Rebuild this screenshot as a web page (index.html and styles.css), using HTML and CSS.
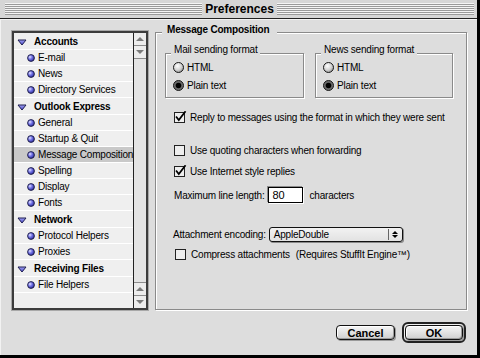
FILE: index.html
```html
<!DOCTYPE html>
<html>
<head>
<meta charset="utf-8">
<title>Preferences</title>
<link rel="stylesheet" href="styles.css">
</head>
<body>
<svg class="defs" width="0" height="0" aria-hidden="true">
  <defs>
    <radialGradient id="dotg" cx="35%" cy="35%" r="70%">
      <stop offset="0" stop-color="#e4e4ff"/>
      <stop offset="0.45" stop-color="#7474e8"/>
      <stop offset="1" stop-color="#2a2a9a"/>
    </radialGradient>
    <radialGradient id="radg" cx="40%" cy="35%" r="70%">
      <stop offset="0" stop-color="#ffffff"/>
      <stop offset="0.6" stop-color="#d0d0d0"/>
      <stop offset="1" stop-color="#8a8a8a"/>
    </radialGradient>
    <linearGradient id="trig" x1="0" y1="0" x2="0" y2="1">
      <stop offset="0" stop-color="#a0a0f4"/>
      <stop offset="1" stop-color="#4a4ac8"/>
    </linearGradient>
  </defs>
</svg>
<div class="window">
  <div class="titlebar">
    <div class="stripes"></div>
    <div class="title">Preferences</div>
    <div class="stripes"></div>
  </div>
  <div class="content">
    <div class="main">
      <div class="list">
        <div class="items">
          <div class="row head"><svg class="tri" width="10" height="7" viewBox="0 0 10 7"><polygon points="1,1 9,1 5,6" fill="url(#trig)" stroke="#1e1e50" stroke-width="1" stroke-linejoin="round"/></svg>Accounts</div>
          <div class="row item"><svg class="dot" width="8" height="8" viewBox="0 0 8 8"><circle cx="4" cy="4" r="3.4" fill="url(#dotg)" stroke="#1a1a40" stroke-width="0.9"/></svg>E-mail</div>
          <div class="row item"><svg class="dot" width="8" height="8" viewBox="0 0 8 8"><circle cx="4" cy="4" r="3.4" fill="url(#dotg)" stroke="#1a1a40" stroke-width="0.9"/></svg>News</div>
          <div class="row item"><svg class="dot" width="8" height="8" viewBox="0 0 8 8"><circle cx="4" cy="4" r="3.4" fill="url(#dotg)" stroke="#1a1a40" stroke-width="0.9"/></svg>Directory Services</div>
          <div class="row head"><svg class="tri" width="10" height="7" viewBox="0 0 10 7"><polygon points="1,1 9,1 5,6" fill="url(#trig)" stroke="#1e1e50" stroke-width="1" stroke-linejoin="round"/></svg>Outlook Express</div>
          <div class="row item"><svg class="dot" width="8" height="8" viewBox="0 0 8 8"><circle cx="4" cy="4" r="3.4" fill="url(#dotg)" stroke="#1a1a40" stroke-width="0.9"/></svg>General</div>
          <div class="row item"><svg class="dot" width="8" height="8" viewBox="0 0 8 8"><circle cx="4" cy="4" r="3.4" fill="url(#dotg)" stroke="#1a1a40" stroke-width="0.9"/></svg>Startup &amp; Quit</div>
          <div class="row item selected"><svg class="dot" width="8" height="8" viewBox="0 0 8 8"><circle cx="4" cy="4" r="3.4" fill="url(#dotg)" stroke="#1a1a40" stroke-width="0.9"/></svg>Message Composition</div>
          <div class="row item"><svg class="dot" width="8" height="8" viewBox="0 0 8 8"><circle cx="4" cy="4" r="3.4" fill="url(#dotg)" stroke="#1a1a40" stroke-width="0.9"/></svg>Spelling</div>
          <div class="row item"><svg class="dot" width="8" height="8" viewBox="0 0 8 8"><circle cx="4" cy="4" r="3.4" fill="url(#dotg)" stroke="#1a1a40" stroke-width="0.9"/></svg>Display</div>
          <div class="row item"><svg class="dot" width="8" height="8" viewBox="0 0 8 8"><circle cx="4" cy="4" r="3.4" fill="url(#dotg)" stroke="#1a1a40" stroke-width="0.9"/></svg>Fonts</div>
          <div class="row head"><svg class="tri" width="10" height="7" viewBox="0 0 10 7"><polygon points="1,1 9,1 5,6" fill="url(#trig)" stroke="#1e1e50" stroke-width="1" stroke-linejoin="round"/></svg>Network</div>
          <div class="row item"><svg class="dot" width="8" height="8" viewBox="0 0 8 8"><circle cx="4" cy="4" r="3.4" fill="url(#dotg)" stroke="#1a1a40" stroke-width="0.9"/></svg>Protocol Helpers</div>
          <div class="row item"><svg class="dot" width="8" height="8" viewBox="0 0 8 8"><circle cx="4" cy="4" r="3.4" fill="url(#dotg)" stroke="#1a1a40" stroke-width="0.9"/></svg>Proxies</div>
          <div class="row head"><svg class="tri" width="10" height="7" viewBox="0 0 10 7"><polygon points="1,1 9,1 5,6" fill="url(#trig)" stroke="#1e1e50" stroke-width="1" stroke-linejoin="round"/></svg>Receiving Files</div>
          <div class="row item"><svg class="dot" width="8" height="8" viewBox="0 0 8 8"><circle cx="4" cy="4" r="3.4" fill="url(#dotg)" stroke="#1a1a40" stroke-width="0.9"/></svg>File Helpers</div>
        </div>
        <div class="scrollbar">
          <div class="sb-btn up top"></div>
          <div class="sb-btn down top"></div>
          <div class="sb-track"></div>
          <div class="sb-btn up bottom"></div>
          <div class="sb-btn down bottom"></div>
        </div>
      </div>
      <div class="group">
        <div class="group-title">Message Composition</div>
        <div class="formats">
          <div class="box mail">
            <div class="box-title">Mail sending format</div>
            <div class="radio-row"><svg class="radio" width="11" height="11" viewBox="0 0 11 11"><circle cx="5.5" cy="5.5" r="5" fill="url(#radg)" stroke="#1a1a1a" stroke-width="1"/></svg>HTML</div>
            <div class="radio-row"><svg class="radio" width="11" height="11" viewBox="0 0 11 11"><circle cx="5.5" cy="5.5" r="5" fill="#6a6a6a" stroke="#1a1a1a" stroke-width="1"/><circle cx="5.5" cy="5.5" r="2.8" fill="#000"/></svg>Plain text</div>
          </div>
          <div class="box news">
            <div class="box-title">News sending format</div>
            <div class="radio-row"><svg class="radio" width="11" height="11" viewBox="0 0 11 11"><circle cx="5.5" cy="5.5" r="5" fill="url(#radg)" stroke="#1a1a1a" stroke-width="1"/></svg>HTML</div>
            <div class="radio-row"><svg class="radio" width="11" height="11" viewBox="0 0 11 11"><circle cx="5.5" cy="5.5" r="5" fill="#6a6a6a" stroke="#1a1a1a" stroke-width="1"/><circle cx="5.5" cy="5.5" r="2.8" fill="#000"/></svg>Plain text</div>
          </div>
        </div>
        <div class="opt reply"><svg class="check" width="13" height="12" viewBox="0 0 13 12"><rect x="0.5" y="1.5" width="10" height="10" fill="#eeeeee" stroke="#222" stroke-width="1"/><path d="M2.6 6.2 L4.8 9 L11 1" fill="none" stroke="#000" stroke-width="1.8" stroke-linecap="square"/></svg>Reply to messages using the format in which they were sent</div>
        <div class="opt quoting"><svg class="check" width="13" height="12" viewBox="0 0 13 12"><rect x="0.5" y="1.5" width="10" height="10" fill="#eeeeee" stroke="#222" stroke-width="1"/></svg>Use quoting characters when forwarding</div>
        <div class="opt internet"><svg class="check" width="13" height="12" viewBox="0 0 13 12"><rect x="0.5" y="1.5" width="10" height="10" fill="#eeeeee" stroke="#222" stroke-width="1"/><path d="M2.6 6.2 L4.8 9 L11 1" fill="none" stroke="#000" stroke-width="1.8" stroke-linecap="square"/></svg>Use Internet style replies</div>
        <div class="opt linelen"><span>Maximum line length:</span><span class="field">80</span><span class="after">characters</span></div>
        <div class="opt encoding"><span>Attachment encoding:</span><span class="popup"><span class="popup-text">AppleDouble</span><span class="popup-arrows"><span class="pa-up"></span><span class="pa-down"></span></span></span></div>
        <div class="opt compress"><svg class="check" width="13" height="12" viewBox="0 0 13 12"><rect x="0.5" y="1.5" width="10" height="10" fill="#eeeeee" stroke="#222" stroke-width="1"/></svg>Compress attachments<span class="note">(Requires StuffIt Engine™)</span></div>
      </div>
    </div>
    <div class="buttons">
      <div class="btn cancel">Cancel</div>
      <div class="default-ring"><div class="btn ok">OK</div></div>
    </div>
  </div>
</div>
</body>
</html>
```

FILE: styles.css
```css
* { box-sizing: border-box; }
html, body { margin: 0; padding: 0; }
body {
  width: 480px;
  height: 358px;
  overflow: hidden;
  background: #dddddd;
  font-family: "Liberation Sans", Arial, sans-serif;
  font-size: 10px;
  letter-spacing: -0.2px;
  color: #000;
}
.defs { display: block; width: 0; height: 0; overflow: hidden; }

.window {
  width: 480px;
  height: 358px;
  background: #dddddd;
  border-right: 3px solid #000;
  border-bottom: 3px solid #000;
  display: flex;
  flex-direction: column;
}

/* title bar */
.titlebar {
  flex: none;
  height: 19px;
  display: flex;
  align-items: center;
  padding: 0 3px 0 5px;
  background: #d6d6d6;
  border-bottom: 1px solid #222;
}
.stripes {
  flex: 1;
  height: 12px;
  background: repeating-linear-gradient(to bottom, #f4f4f4 0 1px, #9a9a9a 1px 2px);
}
.title {
  padding: 0 3px;
  font-size: 12px;
  font-weight: bold;
  letter-spacing: 0;
  line-height: 14px;
}

.content {
  flex: 1;
  display: flex;
  flex-direction: column;
  padding: 12px 10px 0 12px;
  box-shadow: inset 1px 1px 0 #f2f2f2;
}
.main {
  display: flex;
  gap: 7px;
  align-items: flex-start;
}

/* list */
.list {
  width: 136px;
  height: 279px;
  border: 2px solid #3c3c3c;
  box-shadow: 0 0 0 1px #a8a8a8;
  display: flex;
  background: #efefef;
}
.items {
  flex: 1;
  display: flex;
  flex-direction: column;
}
.row {
  height: 16px;
  border-bottom: 1px solid #ffffff;
  display: flex;
  align-items: center;
  white-space: nowrap;
}
.row.head {
  height: 17px;
  font-weight: bold;
  padding-left: 3px;
}
.row.head .tri {
  margin: 3px 7px 0 0;
  flex: none;
}
.row.item {
  padding-left: 13px;
}
.row.item .dot {
  margin-right: 3px;
  flex: none;
}
.row.selected { background: #c9c9c9; }

.scrollbar {
  width: 14px;
  border-left: 1px solid #222;
  display: flex;
  flex-direction: column;
  background: #e8e8e8;
}
.sb-btn {
  height: 13px;
  display: flex;
  align-items: center;
  justify-content: center;
  background: #ececec;
}
.sb-btn.top { border-bottom: 1px solid #8c8c8c; }
.sb-btn.bottom { border-top: 1px solid #8c8c8c; }
.sb-btn.up::after {
  content: "";
  border-left: 4px solid transparent;
  border-right: 4px solid transparent;
  border-bottom: 4px solid #7a7a7a;
}
.sb-btn.down::after {
  content: "";
  border-left: 4px solid transparent;
  border-right: 4px solid transparent;
  border-top: 4px solid #7a7a7a;
}
.sb-track { flex: 1; background: #e4e4e4; }

/* group */
.group {
  width: 312px;
  height: 278px;
  margin-top: 1px;
  border: 1px solid #8a8a8a;
  box-shadow: 1px 1px 0 #ffffff, inset 1px 1px 0 #ffffff;
  padding-left: 9px;
  display: flex;
  flex-direction: column;
  align-items: flex-start;
}
.group-title {
  margin: -9px 0 0 -3px;
  padding: 0 8px 0 5px;
  background: #dddddd;
  font-weight: bold;
  line-height: 12px;
}
.formats {
  display: flex;
  gap: 11px;
  margin-top: 17px;
}
.box {
  border: 1px solid #8a8a8a;
  box-shadow: 1px 1px 0 #ffffff, inset 1px 1px 0 #ffffff;
  padding: 0 0 3px 7px;
  display: flex;
  flex-direction: column;
  align-items: flex-start;
}
.box.mail { width: 139px; }
.box.news { width: 138px; }
.box-title {
  margin: -10px 0 2px -2px;
  padding: 0 3px;
  background: #dddddd;
  line-height: 12px;
}
.radio-row {
  height: 18px;
  display: flex;
  align-items: center;
  gap: 3px;
}

.opt {
  display: flex;
  align-items: center;
  height: 16px;
  margin-left: 9px;
  white-space: nowrap;
}
.opt .check { flex: none; margin-right: 3px; }
.opt.reply { margin-top: 11px; }
.opt.quoting { margin-top: 17px; }
.opt.internet { margin-top: 5px; }
.opt.linelen { margin-top: 8px; }
.opt.encoding { margin-top: 23px; margin-left: 8px; }
.opt.compress { margin-top: 4px; margin-left: 10px; }

.field {
  width: 35px;
  height: 16px;
  margin-left: 4px;
  border: 1px solid #000;
  box-shadow: 1px 1px 0 #ffffff, -1px -1px 0 #8a8a8a;
  background: #ffffff;
  padding: 0 3px;
  line-height: 14px;
  font-size: 11px;
}
.after { margin-left: 6px; }

.popup {
  width: 134px;
  height: 15px;
  margin-left: 3px;
  border: 1px solid #111;
  border-radius: 3px;
  background: linear-gradient(#f2f2f2, #e2e2e2);
  box-shadow: 1px 1px 0 #8a8a8a;
  display: flex;
  align-items: center;
}
.popup-text { flex: 1; padding-left: 4px; line-height: 13px; }
.popup-arrows {
  width: 13px;
  height: 11px;
  margin-right: 1px;
  border-left: 1px solid #666;
  display: flex;
  flex-direction: column;
  align-items: center;
  justify-content: center;
  gap: 1px;
}
.pa-up {
  border-left: 3px solid transparent;
  border-right: 3px solid transparent;
  border-bottom: 3px solid #000;
}
.pa-down {
  border-left: 3px solid transparent;
  border-right: 3px solid transparent;
  border-top: 3px solid #000;
}
.note { margin-left: 6px; }

/* buttons */
.buttons {
  display: flex;
  justify-content: flex-end;
  align-items: center;
  gap: 7px;
  margin-top: 12px;
  padding-right: 1px;
}
.btn {
  height: 15px;
  border: 1px solid #111;
  border-radius: 4px;
  background: linear-gradient(#f6f6f6, #cfcfcf);
  box-shadow: inset 1px 1px 0 #ffffff, inset -1px -1px 0 #9a9a9a, 1px 1px 0 #9a9a9a;
  display: flex;
  align-items: center;
  justify-content: center;
  font-size: 11px;
  font-weight: bold;
  letter-spacing: 0;
}
.btn.cancel { width: 59px; }
.default-ring {
  border: 2px solid #222;
  border-radius: 6px;
  padding: 1px;
  background: #c4c4c4;
  box-shadow: inset 1px 1px 0 #f0f0f0;
}
.btn.ok { width: 58px; }
```
